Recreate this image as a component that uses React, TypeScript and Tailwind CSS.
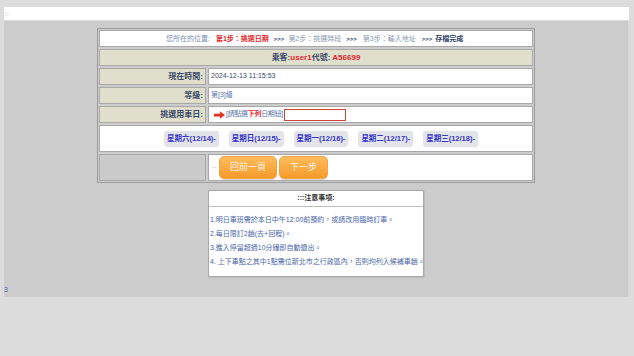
import React from "react";

const days = ["星期六(12/14)-", "星期日(12/15)-", "星期一(12/16)-", "星期二(12/17)-", "星期三(12/18)-"];

const notes = [
  "1.明日車班需於本日中午12:00前預約，或請改用臨時訂車。",
  "2.每日限訂2趟(去+回程)。",
  "3.進入停留超過10分鐘即自動退出。",
  "4. 上下車點之其中1點需位新北市之行政區內，否則均列入候補車趟。",
];

const Label = ({ children }: { children: React.ReactNode }) => (
  <div className="w-[107px] shrink-0 border border-[#a8a8a8] bg-[#e0dfcc] flex items-center justify-end pr-[2px] text-[8px] font-bold text-[#3b4a6b]">
    {children}
  </div>
);

const Value = ({ children }: { children: React.ReactNode }) => (
  <div className="flex-1 border border-[#a8a8a8] bg-white flex items-center pl-[2px]">{children}</div>
);

export default function App() {
  return (
    <div className="h-[356px] w-full bg-[#dcdcdc] pt-[7px] pl-[4px] pr-[5px] font-['Liberation_Sans','Noto_Sans_CJK_TC',sans-serif]">
      {/* top bar */}
      <div className="h-[13px] bg-white flex items-center text-[6px] text-[#999] leading-none">:::</div>

      {/* main panel */}
      <div className="mt-[1px] h-[276px] bg-[#cccccc] border-r border-[#d8d8d8] pt-[7px] flex flex-col">
        <div className="mx-auto w-[438px] border border-[#9c9c9c] p-[1px] flex flex-col gap-[2px] bg-[#cccccc]">
          {/* breadcrumb */}
          <div className="h-[17px] border border-[#a8a8a8] bg-white flex items-center pl-[66px] text-[7px] leading-none whitespace-nowrap">
            <span className="text-[#7b8db0]">您所在的位置:</span>
            <span className="ml-[6px] text-[#e0262a] font-bold">第1步：挑選日期</span>
            <span className="ml-[5px] text-[#2f3d66] font-bold text-[6px]">&gt;&gt;&gt;</span>
            <span className="ml-[4px] text-[#8d9ab2]">第2步：挑選時段</span>
            <span className="ml-[5px] text-[#2f3d66] font-bold text-[6px]">&gt;&gt;&gt;</span>
            <span className="ml-[6px] text-[#8d9ab2]">第3步：輸入地址</span>
            <span className="ml-[6px] text-[#2f3d66] font-bold text-[6px]">&gt;&gt;&gt;</span>
            <span className="ml-[3px] text-[#2f3d66] font-bold">存檔完成</span>
          </div>

          {/* passenger */}
          <div className="h-[17px] border border-[#a8a8a8] bg-[#e0dfcc] flex items-center justify-center text-[8px] font-bold leading-none">
            <span className="text-[#3b4a6b]">乘客:</span>
            <span className="text-[#e0262a]">user1</span>
            <span className="text-[#3b4a6b]">代號:</span>
            <span className="text-[#e0262a] ml-[2px]">A56699</span>
          </div>

          <div className="h-[17px] flex gap-[2px]">
            <Label>現在時間:</Label>
            <Value>
              <span className="text-[7px] text-[#3b4a6b]">2024-12-13 11:15:53</span>
            </Value>
          </div>

          <div className="h-[17px] flex gap-[2px]">
            <Label>等級:</Label>
            <Value>
              <span className="text-[7px] text-[#5a78a8]">第[3]級</span>
            </Value>
          </div>

          <div className="h-[17px] flex gap-[2px]">
            <Label>挑選用車日:</Label>
            <Value>
              <svg width="11" height="8" viewBox="0 0 12 8" className="ml-[3px]">
                <path d="M0 2.5 H6.5 V0 L12 4 L6.5 8 V5.5 H0 Z" fill="#e8331f" />
              </svg>
              <span className="text-[7px] text-[#5a78a8] ml-[1px] tracking-[-0.3px]">[請點選</span>
              <span className="text-[7px] text-[#e0262a] font-bold tracking-[-0.3px]">下列</span>
              <span className="text-[7px] text-[#5a78a8] tracking-[-0.3px]">日期鈕]</span>
              <div className="ml-[1px] w-[62px] h-[12px] border border-[#d0453a] bg-white" />
            </Value>
          </div>

          {/* day buttons */}
          <div className="h-[27px] border border-[#a8a8a8] bg-white flex items-center justify-center gap-[10px] pl-[10px]">
            {days.map((d) => (
              <div
                key={d}
                className="h-[16px] px-[3px] rounded-[4px] bg-[#e3e3ea] shadow-[0_0_1px_rgba(0,0,0,0.15)] flex items-center text-[7.5px] font-bold text-[#3535c8] whitespace-nowrap"
              >
                {d}
              </div>
            ))}
          </div>

          {/* action buttons */}
          <div className="h-[27px] flex gap-[2px]">
            <div className="w-[107px] shrink-0 border border-[#a8a8a8] bg-[#cacaca]" />
            <div className="flex-1 border border-[#a8a8a8] bg-white flex items-center pl-[3px]">
              <span className="text-[5px] text-[#aaa] leading-none">---</span>
              <button className="ml-[2px] w-[58px] h-[23px] rounded-[5px] border border-[#f0a548] bg-gradient-to-b from-[#ffbc5c] to-[#f59a26] text-[9px] text-[#fff4e0] shadow-[0_1px_1px_rgba(0,0,0,0.15)]">
                回前一頁
              </button>
              <button className="ml-[2px] w-[49px] h-[23px] rounded-[5px] border border-[#f0a548] bg-gradient-to-b from-[#ffbc5c] to-[#f59a26] text-[9px] text-[#fff4e0] shadow-[0_1px_1px_rgba(0,0,0,0.15)]">
                下一步
              </button>
            </div>
          </div>
        </div>

        {/* notice */}
        <div className="mx-auto mt-[7px] w-[216px] h-[87px] border border-[#a8a8a8] bg-white shadow-[1px_1px_0_#bdbdbd]">
          <div className="h-[16px] border-b border-[#bdbdbd] flex items-center justify-center text-[7px] font-bold text-[#333]">
            :::注意事項:
          </div>
          <div className="pt-[8px] pl-[1px] flex flex-col gap-[4px]">
            {notes.map((n) => (
              <div key={n} className="text-[7px] leading-[10px] text-[#4a66a8] whitespace-nowrap">
                {n}
              </div>
            ))}
          </div>
        </div>

        <div className="mt-[9px] text-[7px] leading-none text-[#4a66a8]">3</div>
      </div>
    </div>
  );
}
